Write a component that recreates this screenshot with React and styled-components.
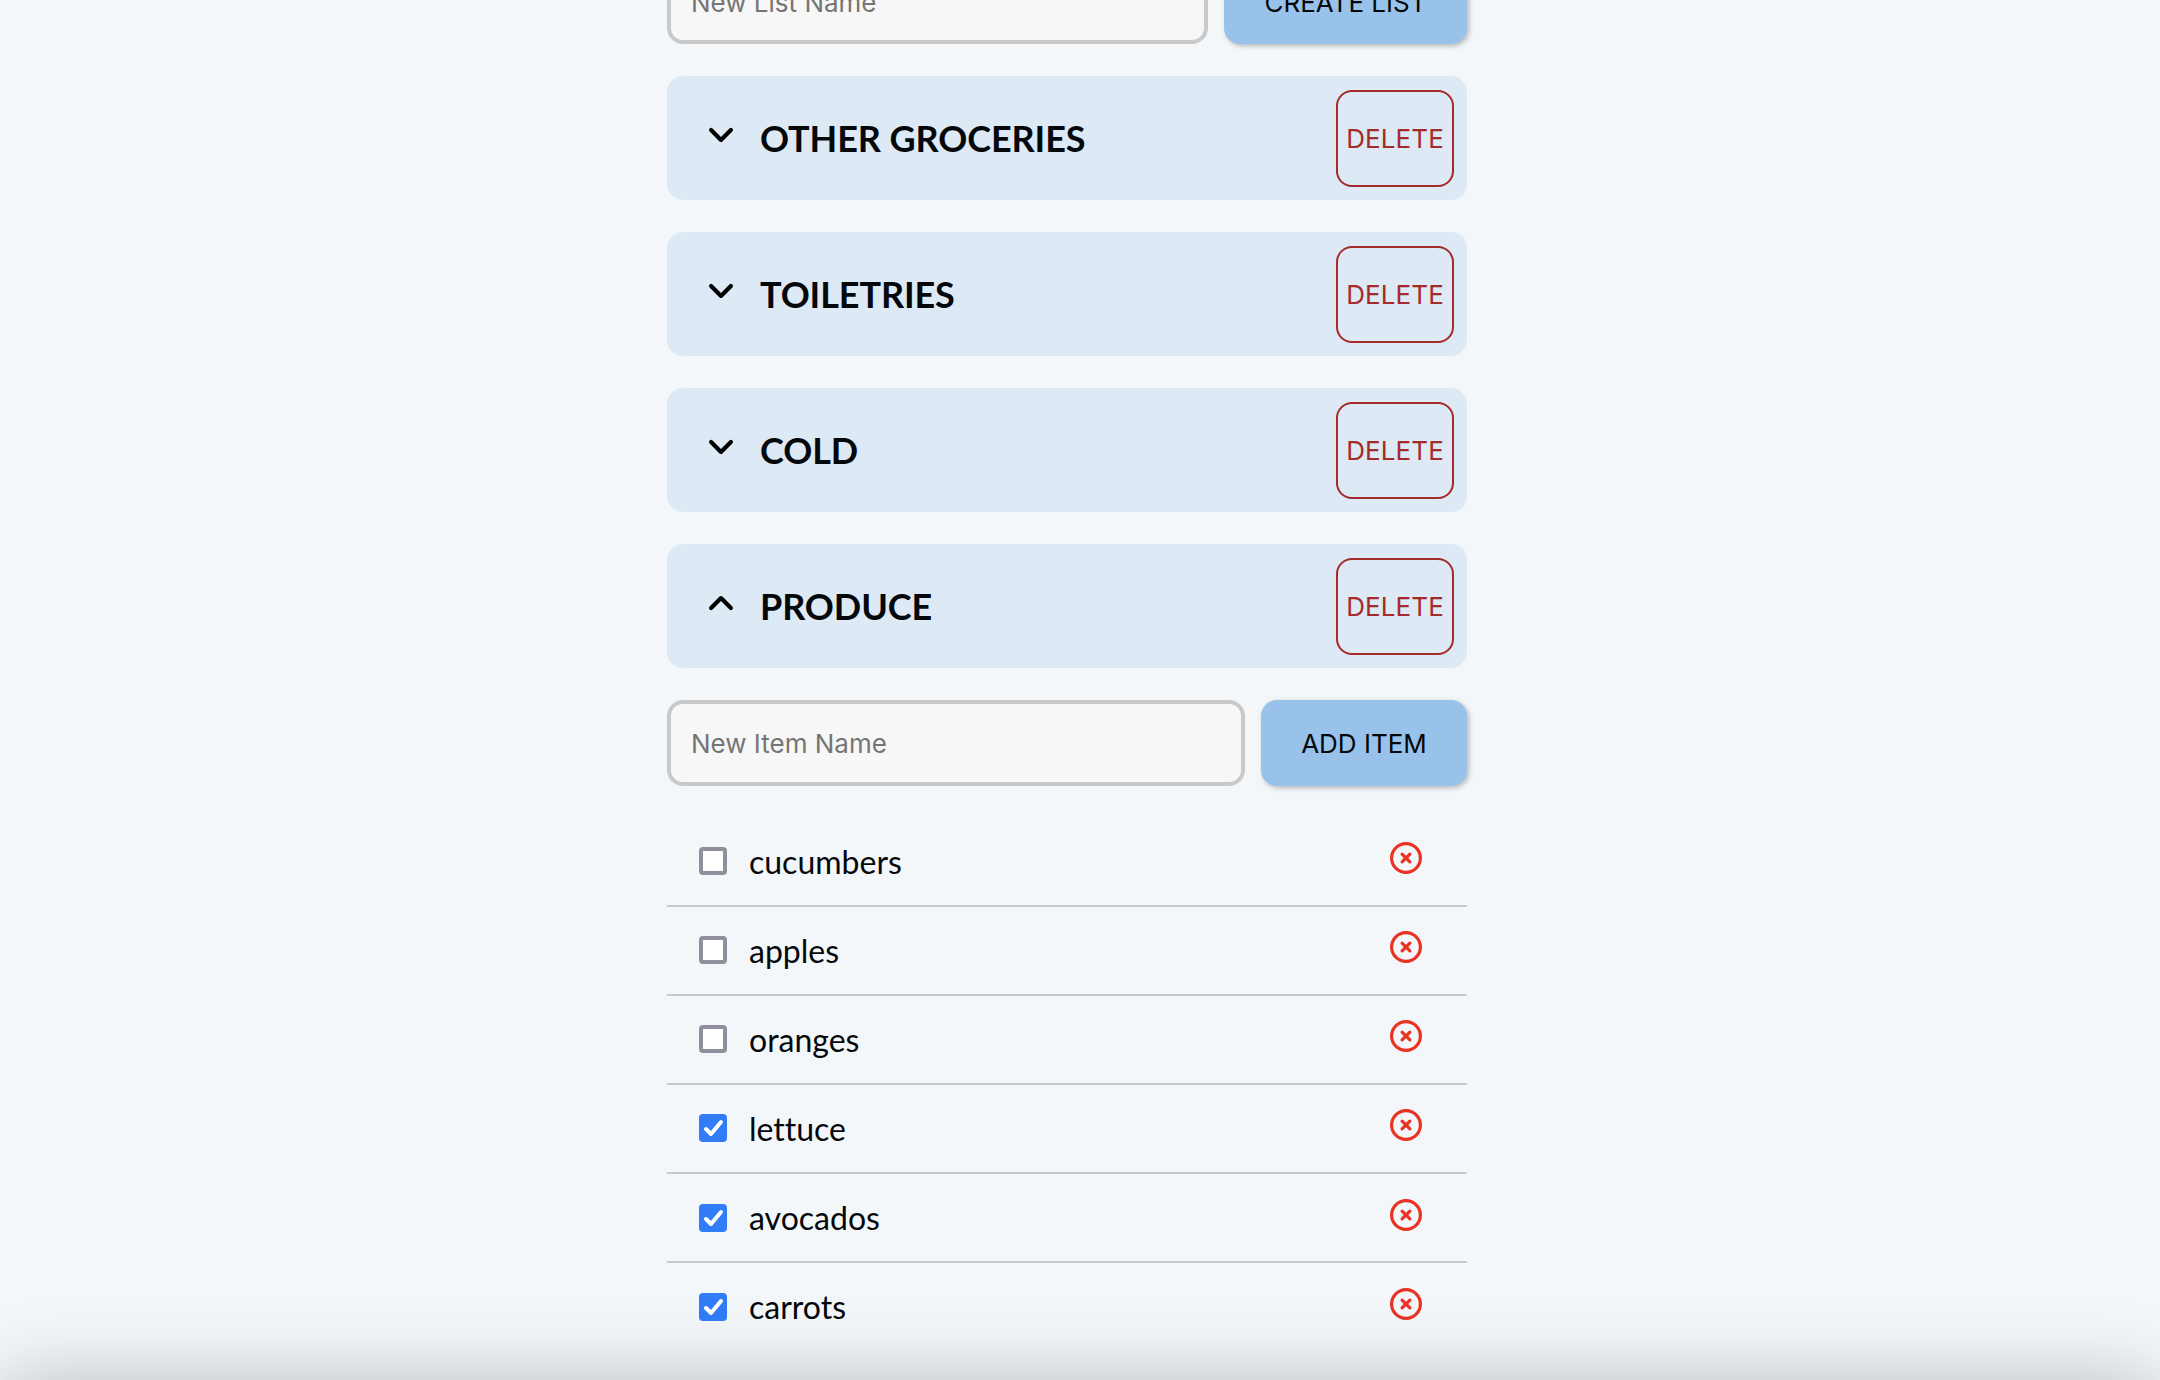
import React, { useState } from "react";
import styled, { createGlobalStyle } from "styled-components";

const GlobalStyle = createGlobalStyle`
  * { box-sizing: border-box; }
  html { height: 100%; overflow: hidden; }
  body {
    margin: 0;
    height: 100%;
    overflow: hidden;
    background: #f3f7fa;
    color: #05080b;
    font-family: Lato, sans-serif;
    font-size: 32px;
  }
`;

const Column = styled.main`
  width: 800px;
  margin: -40px 0 0 667px;
`;

const Stack = styled.div`
  display: flex;
  flex-direction: column;
  gap: 32px;
`;

const Form = styled.form`
  display: flex;
  gap: 16px;
  height: ${(p) => p.$height}px;
`;

const Input = styled.input`
  flex: 1;
  min-width: 0;
  padding: 0 20px;
  border: 4px solid #c9c9c9;
  border-radius: 16px;
  background: #f7f7f7;
  font-family: Inter, sans-serif;
  font-size: 26px;
  outline: none;
  &::placeholder { color: #757575; opacity: 1; }
`;

const Submit = styled.button`
  width: ${(p) => p.$width}px;
  padding: 0;
  border: 0;
  border-radius: 16px;
  background: #98c2ea;
  color: #05080b;
  box-shadow: 2px 2px 5px rgba(0, 0, 0, 0.25);
  font-family: Inter, sans-serif;
  font-size: 26px;
`;

const Card = styled.section`
  display: flex;
  align-items: center;
  height: 124px;
  padding: 0 13px 0 38px;
  border-radius: 16px;
  background: #dde9f5;
`;

const Chevron = styled.svg`
  width: 32px;
  height: 32px;
  margin-top: -6px;
  transform: ${(p) => (p.$open ? "rotate(180deg)" : "none")};
`;

const Title = styled.h3`
  flex: 1;
  margin: 0 0 0 23px;
  font-size: 36px;
  letter-spacing: -0.1px;
  font-weight: 700;
  line-height: 45px;
`;

const Delete = styled.button`
  width: 118px;
  height: 97px;
  padding: 0;
  border: 2px solid #a52a2a;
  border-radius: 16px;
  background: transparent;
  color: #a52a2a;
  font-family: Inter, sans-serif;
  font-size: 26px;
  font-weight: 430;
  letter-spacing: 0.1px;
`;

const List = styled.ul`
  margin: 31.4px 0 0;
  padding: 0;
  list-style: none;
`;

const Item = styled.li`
  display: flex;
  align-items: flex-start;
  height: 89.16px;
  padding: 0 45px 0 32px;
  border-bottom: 2px solid #c9c9c9;
  &:last-child { border-bottom: 0; }
`;

const Check = styled.input`
  appearance: none;
  width: 28px;
  height: 28px;
  margin: 29.55px 0 0;
  border: 4px solid #8f8f9d;
  border-radius: 4px;
  background: #fff;
`;

const Checked = styled.svg`
  width: 28px;
  height: 28px;
  margin-top: 29.55px;
`;

const Label = styled.span`
  flex: 1;
  margin: 25.2px 0 0 22px;
  line-height: 38px;
  font-variant-ligatures: none;
`;

const Remove = styled.svg`
  width: 32px;
  height: 32px;
  margin-top: 24.55px;
`;

const BottomShade = styled.div`
  position: fixed;
  left: 0;
  right: 0;
  bottom: -100px;
  height: 100px;
  box-shadow: 0 0 80px 0 rgba(0, 0, 0, 0.23);
  pointer-events: none;
`;

const lists = [
  { name: "OTHER GROCERIES" },
  { name: "TOILETRIES" },
  { name: "COLD" },
  { name: "PRODUCE", open: true },
];

const initialItems = [
  { name: "cucumbers", done: false },
  { name: "apples", done: false },
  { name: "oranges", done: false },
  { name: "lettuce", done: true },
  { name: "avocados", done: true },
  { name: "carrots", done: true },
];

function AddForm({ placeholder, label, width, height }) {
  return (
    <Form $height={height} onSubmit={(e) => e.preventDefault()}>
      <Input placeholder={placeholder} />
      <Submit $width={width}>{label}</Submit>
    </Form>
  );
}

export default function App() {
  const [items, setItems] = useState(initialItems);
  const toggle = (i) =>
    setItems(items.map((it, n) => (n === i ? { ...it, done: !it.done } : it)));
  return (
    <>
      <GlobalStyle />
      <Column>
        <Stack>
          <AddForm placeholder="New List Name" label="CREATE LIST" width={243} height={84} />
          {lists.map((l) => (
            <Card key={l.name}>
              <Chevron
                $open={l.open}
                viewBox="0 0 32 32"
                fill="none"
                stroke="#000"
                strokeWidth="4.2"
                strokeLinecap="round"
                strokeLinejoin="round"
              >
                <path d="M6.1 11.1 L16 20.9 L25.9 11.1" />
              </Chevron>
              <Title>{l.name}</Title>
              <Delete>DELETE</Delete>
            </Card>
          ))}
          <AddForm placeholder="New Item Name" label="ADD ITEM" width={206} height={86} />
        </Stack>
        <List>
          {items.map((it, i) => (
            <Item key={it.name}>
              {it.done ? (
                <Checked viewBox="0 0 28 28" onClick={() => toggle(i)}>
                  <rect width="28" height="28" rx="4" fill="#317cf7" />
                  <path
                    d="M7 15 L12 20 L22 8"
                    fill="none"
                    stroke="#fff"
                    strokeWidth="4"
                    strokeLinecap="round"
                    strokeLinejoin="round"
                  />
                </Checked>
              ) : (
                <Check type="checkbox" checked={false} onChange={() => toggle(i)} />
              )}
              <Label>{it.name}</Label>
              <Remove viewBox="0 0 32 32" fill="none" stroke="#ea3323" strokeWidth="3.2" strokeLinecap="round">
                <circle cx="16" cy="16" r="14.4" />
                <path d="M12.1 12.1 L19.9 19.9 M19.9 12.1 L12.1 19.9" />
              </Remove>
            </Item>
          ))}
        </List>
      </Column>
      <BottomShade />
    </>
  );
}
